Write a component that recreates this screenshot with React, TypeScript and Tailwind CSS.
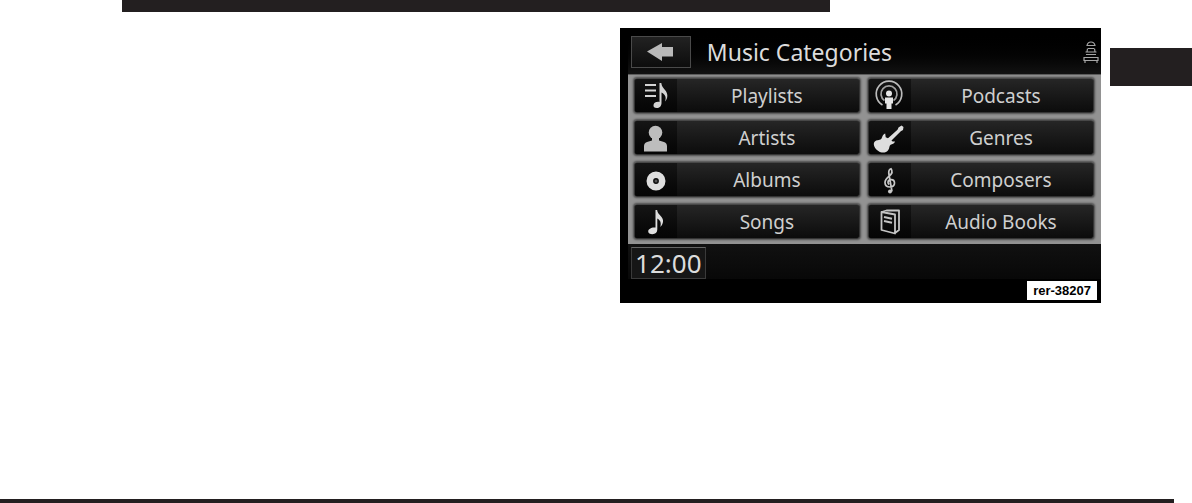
import type { ReactNode } from "react";

type Category = { name: string; icon: ReactNode };

const categories: Category[] = [
  {
    name: "Playlists",
    icon: (
      <svg viewBox="1 1 42 33" className="h-full w-full" fill="#d4d4d4" aria-hidden="true">
        <path d="M11 6h11v2H11zM11 11.500h11v2H11zM11 17h11v2H11z" />
        <path d="M25.500 5h1.800c.3 3 1.700 4.500 3.700 7 3 3.500 3.300 8 0 11.500 1.500-4 .5-7-3.500-9V25c0 3-2 5-4.700 5-2.400 0-3.600-1.400-3.300-3.100.4-2.100 3-3.500 6-2.900z" />
      </svg>
    ),
  },
  {
    name: "Podcasts",
    icon: (
      <svg viewBox="1 1 42 33" className="h-full w-full" aria-hidden="true">
        <g fill="none" strokeWidth="1.700">
          <path d="M14.500 27A12.800 12.800 0 1 1 27.500 27" stroke="#bcbcbc" />
          <path d="M16.500 22.500a8 8 0 1 1 9 0" stroke="#a0a0a0" />
        </g>
        <circle cx="21" cy="15.500" r="3" fill="#e6e6e6" />
        <path d="M17 19.500h8v6h-1.500V31h-5v-5.500H17z" fill="#e6e6e6" />
      </svg>
    ),
  },
  {
    name: "Artists",
    icon: (
      <svg viewBox="1 1 42 33" className="h-full w-full" fill="#bdbdbd" aria-hidden="true">
        <circle cx="21.500" cy="12.500" r="6.800" />
        <path d="M18 17h7v3.500l5 1.500c2.300.8 3 2.500 3 4.500v5H10v-5c0-2 .7-3.700 3-4.500l5-1.500z" />
      </svg>
    ),
  },
  {
    name: "Genres",
    icon: (
      <svg viewBox="1 1 42 33" className="h-full w-full" fill="#dedede" aria-hidden="true">
        <path d="M30.500 7.500 33.500 5.500l2 1.500-.5 3-2.200 1.200-9.300 9.300c.5 1.200 2 1 3.500.9-.8 2.500-2.700 2.400-4.400 3.300-1.600 1-.8 3.500-2.300 5.300-2.300 3.200-6.800 3.300-10 1-3.600-2.400-5.500-6.500-3.900-9 1.800-2.600 5-1.300 6.800-3 1.200-1.200.8-4 4-5.500l.5 3.700 2.300 1 9.500-8.500z" />
      </svg>
    ),
  },
  {
    name: "Albums",
    icon: (
      <svg viewBox="1 1 42 33" className="h-full w-full" aria-hidden="true">
        <circle cx="22" cy="19" r="6.200" fill="none" stroke="#dedede" strokeWidth="6.600" />
        <circle cx="22" cy="19" r="1.500" fill="#555" />
      </svg>
    ),
  },
  {
    name: "Composers",
    icon: (
      <svg viewBox="1 1 42 33" className="h-full w-full" fill="none" stroke="#c8c8c8" aria-hidden="true">
        <path d="m24 29.500-3.200-18c-.3-2.500.7-4.300 2.200-4.800 1.800 2.500.8 5.300-1.700 7.300-3 2.500-4.300 4.200-4.300 6.500 0 3 2.300 4.500 5 4.500s4.500-1.700 4.500-3.900c0-2-1.500-3.500-3.300-3.500-2 0-3.200 1.300-3.200 2.800 0 1 .5 1.600 1.300 2.100" strokeWidth="1.700" />
        <circle cx="22" cy="29.500" r="2" fill="#c8c8c8" stroke="none" />
      </svg>
    ),
  },
  {
    name: "Songs",
    icon: (
      <svg viewBox="1 1 42 33" className="h-full w-full" fill="#dedede" aria-hidden="true">
        <path d="M21.500 6h1.600c.4 3 2 4.300 3.800 6.200 3 3.300 3 7-.6 10.800 1-3.800.5-6.500-3-8.500V25.500c0 2.800-2 4.700-4.800 4.700-2.500 0-4.500-1.200-4.300-3 .2-2.200 3.500-4.200 7.300-3.600z" />
      </svg>
    ),
  },
  {
    name: "Audio Books",
    icon: (
      <svg viewBox="1 1 42 33" className="h-full w-full" fill="none" stroke="#c4c4c4" aria-hidden="true">
        <path d="M13.500 8 27 10.500v19l-13.500-3.500zM13.500 8l5-1.500H31V26l-4 3" strokeWidth="1.800" strokeLinejoin="round" />
        <path d="m16 13 8 1.800M16 17l8 1.800" strokeWidth="2" />
      </svg>
    ),
  },
];

function CategoryButton({ name, icon }: Category) {
  return (
    <button
      type="button"
      className="flex h-[35px] items-stretch overflow-hidden rounded-[3px] border border-[#343434] border-t-[#484848] bg-linear-to-b from-[#262626] to-[#0c0c0c] shadow-[0_0_2px_1px_rgba(30,30,30,0.6)]"
    >
      <span className="w-[42px] shrink-0 bg-linear-to-b from-[#151515] to-[#050505]">{icon}</span>
      <span className="flex-1 self-center pr-0.5 text-center text-[19px] leading-6 text-[#cfcfcf]">{name}</span>
    </button>
  );
}

export default function App() {
  return (
    <div className="flex min-h-screen flex-col bg-white font-['Noto_Sans',sans-serif]">
      <div className="mr-[362px] ml-[122px] h-3 bg-[#231f20]" />
      <main className="flex items-start gap-[9px] pt-4 pl-[52%]">
        <section className="flex-1 bg-black pl-2">
          <header className="flex items-center bg-linear-to-b from-black to-[#121212] pt-2 pr-0.5 pb-1.5 pl-[3px]">
            <button
              type="button"
              aria-label="Back"
              className="flex h-8 w-[60px] items-center justify-center border border-[#4a4a4a] bg-linear-to-b from-[#222] to-[#0d0d0d]"
            >
              <svg viewBox="0 0 28 18" className="h-[18px] w-7" fill="#b9b9b9" aria-hidden="true">
                <path d="M0 8.500 15 0v4h11v9.500H15V18z" />
              </svg>
            </button>
            <h1 className="flex-1 pl-4 text-[23px] leading-8 text-[#dcdcdc]">Music Categories</h1>
            <svg viewBox="0 0 16 24" className="h-6 w-4" fill="none" stroke="#a5a5a5" strokeWidth="1.200" aria-hidden="true">
              <path d="M4 5.500h8C11.500 3 10.500 2 8 2S4.500 3 4 5.500zM5 8.500h6M2.500 12h11M4.500 8.500 4 12M11.500 8.500l.5 3.500M3 14.500h10M1 17.500h14v3H1zM2 20.500V23M14 20.500V23" />
            </svg>
          </header>
          <div className="grid grid-cols-2 gap-x-2 gap-y-[7px] border-t border-[#5c5c5c] bg-[#929292] px-1.5 pt-[3px] pr-[7px] pb-[5px]">
            {categories.map((category) => (
              <CategoryButton key={category.name} {...category} />
            ))}
          </div>
          <footer className="flex flex-col bg-linear-to-b from-[#111] to-[#080808] pt-[3px] pl-[3px]">
            <time className="h-8 w-[75px] border border-[#3a3a3a] border-t-[#666] bg-[#161616] text-center text-[26px] leading-[30px] text-[#dcdcdc]">
              12:00
            </time>
          </footer>
          <div className="flex justify-end pt-0.5 pr-1 pb-[3px]">
            <span className="bg-white px-1.5 font-['Liberation_Sans',sans-serif] text-[13px] leading-[19px] font-bold text-black">
              rer-38207
            </span>
          </div>
        </section>
        <div className="mt-5 h-[38px] w-[82px] shrink-0 bg-[#231f20]" />
      </main>
      <div className="mt-auto mr-[18px] h-1 bg-[#231f20]" />
    </div>
  );
}
